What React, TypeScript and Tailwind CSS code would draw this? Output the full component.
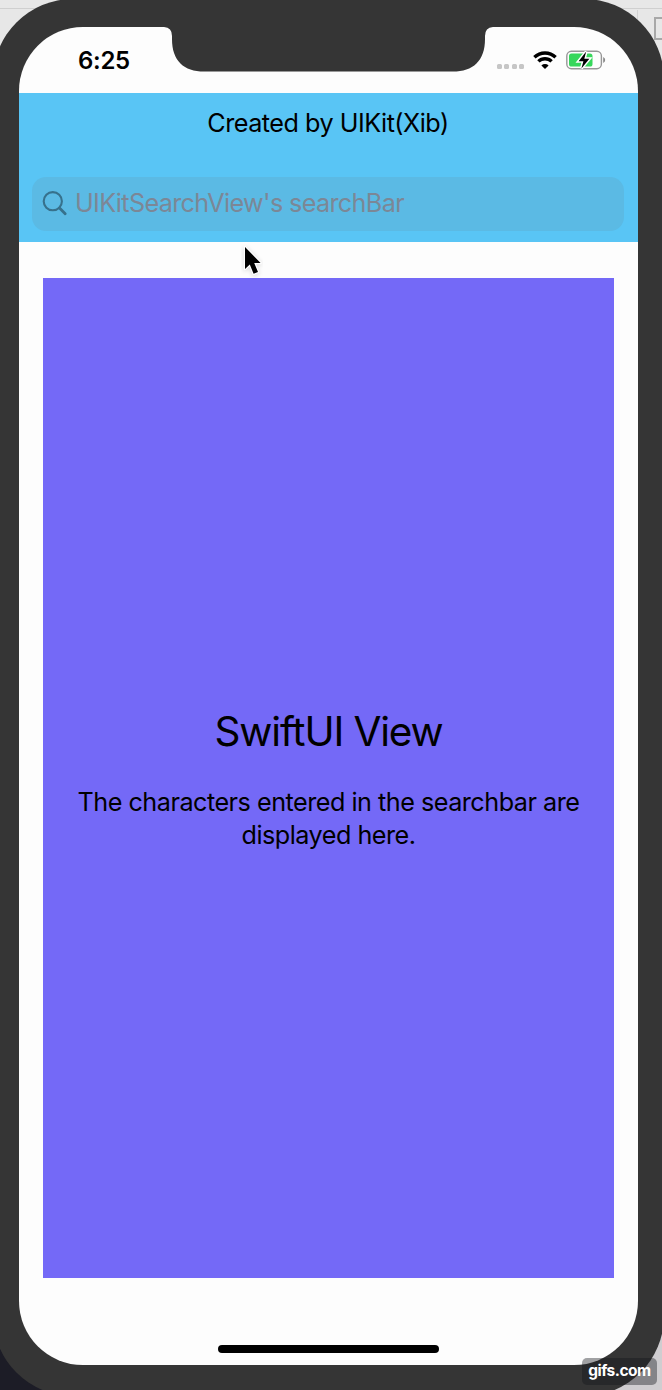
function Wifi() {
  return (
    <svg width="24" height="18" viewBox="0 0 24 18" fill="none" stroke="#000" strokeWidth="3.4">
      <path d="M1.4 6.3 A15.2 15.2 0 0 1 22.6 6.3" />
      <path d="M5.4 10.4 A9.5 9.5 0 0 1 18.6 10.4" />
      <path d="M12 18 L8.4 14.4 A5.2 5.2 0 0 1 15.6 14.4 Z" fill="#000" stroke="none" />
    </svg>
  );
}

function Battery() {
  return (
    <svg width="40" height="20" viewBox="0 0 40 20">
      <rect x="0.8" y="1.3" width="34.6" height="17.4" rx="4.6" fill="none" stroke="#979797" strokeWidth="1.4" />
      <path d="M37.2 7 Q39.2 8 39.2 10 Q39.2 12 37.2 13 Z" fill="#8a8a8a" />
      <rect x="3" y="3.5" width="23.5" height="13" rx="2.6" fill="#36d75b" />
      <path d="M20.2 1.6 L12.6 11.2 H17.4 L15.4 18.4 L23.4 8.8 H18.3 Z" fill="#000" stroke="#fff" strokeWidth="3" paintOrder="stroke" />
    </svg>
  );
}

function Notch() {
  return (
    <svg className="absolute left-[141px] top-0" width="336" height="45" viewBox="0 0 336 45">
      <path transform="translate(0 0)" d="M0 0 H4 Q12 0.5 12 9 V12 C12 34 24 44.5 44 44.5 H293 C313 44.5 325 34 325 12 V9 Q325 0.5 333 0 H336 Z" fill="#353535" />
    </svg>
  );
}

function StatusBar() {
  return (
    <div className="flex h-[66px] shrink-0 justify-between pl-[59px] pr-[32px]">
      <span className="mt-[17px] text-[24px] font-semibold leading-[34px] tracking-[-0.3px]">6:25</span>
      <div className="mt-[23px] flex h-5 items-start">
        <div className="mr-[9px] mt-[14px] flex gap-[2.5px]">
          <i className="size-[5px] rounded-[1.5px] bg-[#c6c6c6]" />
          <i className="size-[5px] rounded-[1.5px] bg-[#c6c6c6]" />
          <i className="size-[5px] rounded-[1.5px] bg-[#c6c6c6]" />
          <i className="size-[5px] rounded-[1.5px] bg-[#c6c6c6]" />
        </div>
        <div className="mr-[9px] mt-px"><Wifi /></div>
        <Battery />
      </div>
    </div>
  );
}

function SearchHeader() {
  return (
    <header className="h-[149px] shrink-0 bg-[#59c5f5] pl-[13px] pr-[14px] pt-[13px]">
      <h1 className="text-center text-[25.2px] font-normal leading-[34px] tracking-[-0.5px]">Created by UIKit(Xib)</h1>
      <div className="mt-[37px] flex h-[54px] items-center rounded-[14px] bg-[#5bbae4] pl-[10px]">
        <svg width="26" height="26" viewBox="0 0 26 26" fill="none" stroke="#37718c" strokeWidth="2.1">
          <circle cx="10.8" cy="10.2" r="9.1" />
          <path d="M17.5 17 L23.2 22.8" strokeWidth="2.8" strokeLinecap="round" />
        </svg>
        <span className="mb-[2px] ml-[7px] whitespace-nowrap text-[25.2px] leading-[34px] tracking-[-0.65px] text-[#7c8796]">UIKitSearchView's searchBar</span>
      </div>
    </header>
  );
}

export default function App() {
  return (
    <div className="relative h-[1390px] w-[662px] overflow-hidden bg-[#e7e7e7] font-['Inter','Liberation_Sans',sans-serif] text-black">
      <div className="h-[9px] w-full border-b border-[#cfcfcf]" />
      <div className="absolute left-[637px] top-[10px] h-10 w-px bg-[#d2d2d2]" />
      <div className="absolute left-[654px] top-[17px] h-[23px] w-5 border-2 border-[#a8a8a8]" />
      <div className="absolute bottom-0 left-0 h-20 w-20 bg-[#1c1c26]" />
      <div className="absolute bottom-0 right-0 h-20 w-20 bg-[#cfcdd0]" />
      <div className="relative -ml-[7px] -mt-[10px] h-[1397px] w-[671px] rounded-[80px] bg-[#353535] px-[26px] pt-[28px]">
        <main className="relative flex h-[1338px] w-[619px] flex-col overflow-hidden rounded-[64px] bg-[#fdfdfd]">
          <Notch />
          <StatusBar />
          <SearchHeader />
          <section className="mx-6 mt-9 flex h-[1000px] shrink-0 flex-col items-center bg-[#7469f7] pt-[428px] text-center">
            <h2 className="whitespace-nowrap text-[40.5px] leading-[52px] tracking-[-1.15px]">SwiftUI View</h2>
            <p className="mt-[28px] whitespace-nowrap text-[25.2px] leading-[32.5px] tracking-[-0.5px]">
              The characters entered in the searchbar are
              <br />
              displayed here.
            </p>
          </section>
          <div className="mx-auto mt-[67px] h-[8px] w-[221px] rounded-full bg-black" />
        </main>
      </div>
      <svg className="absolute left-[241px] top-[244px]" width="22" height="36" viewBox="0 0 22 36">
        <path d="M4 3 V25 L8.8 20.4 L12.6 29.8 L17 28 L13.2 19 H19.6 Z" fill="#000" stroke="#fff" strokeWidth="2.4" paintOrder="stroke" strokeLinejoin="round" className="drop-shadow-sm" />
      </svg>
      <div className="absolute left-[582px] top-[1358px] flex h-[27px] w-[75px] items-center justify-center rounded-[5px] bg-[#14161c]/40 pb-px text-[15.5px] font-bold tracking-[-0.5px] text-white">gifs.com</div>
    </div>
  );
}
